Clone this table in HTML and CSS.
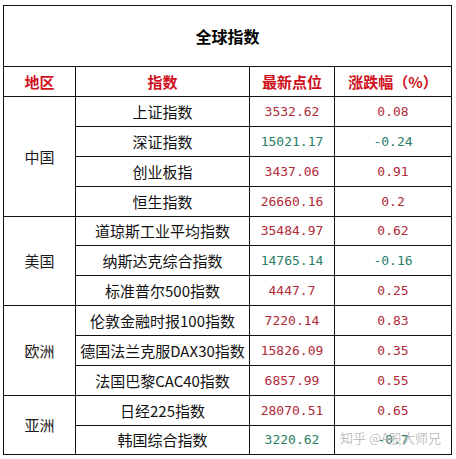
FILE: index.html
```html
<!DOCTYPE html>
<html lang="zh">
<head>
<meta charset="utf-8">
<title>全球指数</title>
<link rel="stylesheet" href="styles.css">
</head>
<body>
<div class="wrap">
<table class="idx">
  <colgroup>
    <col class="c-region"><col class="c-name"><col class="c-pt"><col class="c-pct">
  </colgroup>
  <tr class="r-title"><td colspan="4" class="title">全球指数</td></tr>
  <tr class="r-head">
    <th>地区</th><th>指数</th><th>最新点位</th><th>涨跌幅（%）</th>
  </tr>
  <tr class="row"><td rowspan="4" class="region">中国</td><td class="name">上证指数</td><td class="num up">3532.62</td><td class="num up">0.08</td></tr>
  <tr class="row"><td class="name">深证指数</td><td class="num down">15021.17</td><td class="num down">-0.24</td></tr>
  <tr class="row"><td class="name">创业板指</td><td class="num up">3437.06</td><td class="num up">0.91</td></tr>
  <tr class="row"><td class="name">恒生指数</td><td class="num up">26660.16</td><td class="num up">0.2</td></tr>
  <tr class="row short"><td rowspan="3" class="region">美国</td><td class="name">道琼斯工业平均指数</td><td class="num up">35484.97</td><td class="num up">0.62</td></tr>
  <tr class="row"><td class="name">纳斯达克综合指数</td><td class="num down">14765.14</td><td class="num down">-0.16</td></tr>
  <tr class="row"><td class="name">标准普尔500指数</td><td class="num up">4447.7</td><td class="num up">0.25</td></tr>
  <tr class="row"><td rowspan="3" class="region">欧洲</td><td class="name">伦敦金融时报100指数</td><td class="num up">7220.14</td><td class="num up">0.83</td></tr>
  <tr class="row"><td class="name">德国法兰克服DAX30指数</td><td class="num up">15826.09</td><td class="num up">0.35</td></tr>
  <tr class="row"><td class="name">法国巴黎CAC40指数</td><td class="num up">6857.99</td><td class="num up">0.55</td></tr>
  <tr class="row"><td rowspan="2" class="region">亚洲</td><td class="name">日经225指数</td><td class="num up">28070.51</td><td class="num up">0.65</td></tr>
  <tr class="row short"><td class="name">韩国综合指数</td><td class="num down">3220.62</td><td class="num down">-0.7</td></tr>
</table>
<div class="watermark">知乎 @A股大师兄</div>
</div>
</body>
</html>
```

FILE: styles.css
```css
html, body {
  margin: 0;
  padding: 0;
  background: #ffffff;
}
.wrap {
  position: relative;
  padding: 5px 0 0 3px;
}
.idx {
  border-collapse: collapse;
  table-layout: fixed;
  width: 448px;
  font-family: "Noto Sans CJK SC", "Noto Sans", sans-serif;
  font-size: 15px;
  color: #111111;
}
.c-region { width: 72px; }
.c-name { width: 174px; }
.c-pt { width: 85px; }
.c-pct { width: 117px; }
.idx td, .idx th {
  border: 1px solid #111111;
  padding: 0;
  text-align: center;
  vertical-align: middle;
  line-height: 18px;
  white-space: nowrap;
  overflow: hidden;
}
.r-title { height: 61px; }
.title {
  font-size: 16px;
  font-weight: bold;
  color: #000000;
}
.r-head { height: 30px; }
.r-head th {
  font-size: 15px;
  font-weight: bold;
  color: #d0101c;
}
.row { height: 30px; }
.row.short { height: 29px; }
.name { letter-spacing: 0; }
.region { color: #1a1a1a; }
.num {
  font-family: "DejaVu Sans Mono", "Liberation Mono", monospace;
  font-size: 13px;
}
.up { color: #b02a3a; }
.down { color: #2a7e6a; }
.watermark {
  position: absolute;
  left: 340px;
  top: 429px;
  font-family: "Noto Sans CJK SC", "Noto Sans", sans-serif;
  font-size: 13px;
  line-height: 18px;
  color: rgba(170, 170, 170, 0.75);
  white-space: nowrap;
}
```
